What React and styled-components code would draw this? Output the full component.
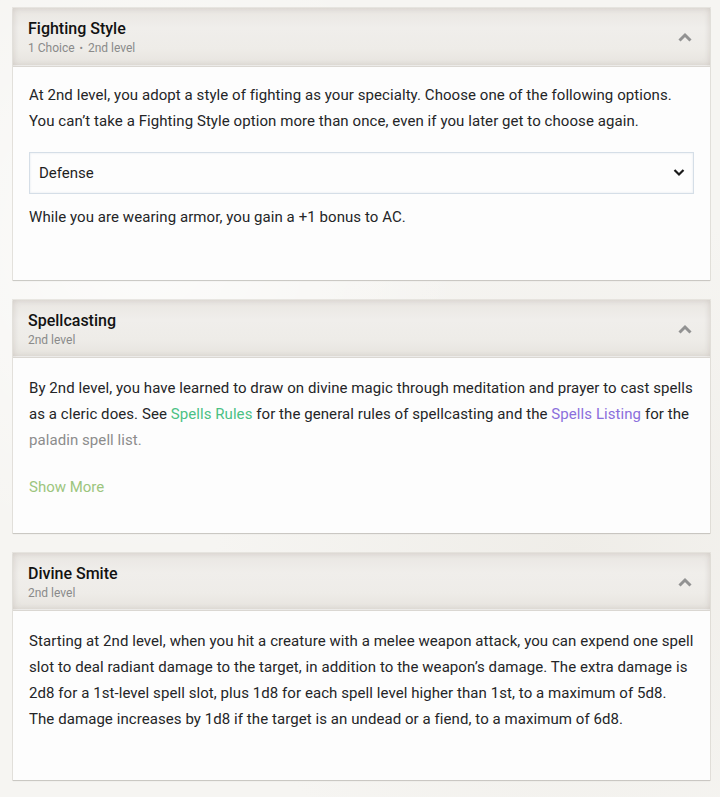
import React from "react";
import styled, { createGlobalStyle } from "styled-components";

const Global = createGlobalStyle`
  html, body { margin: 0; padding: 0; }
  body {
    background: #f6f5f2;
    background-image:
      radial-gradient(circle at 20% 30%, rgba(255,255,255,0.7) 0, rgba(255,255,255,0) 40%),
      radial-gradient(circle at 80% 70%, rgba(232,229,222,0.5) 0, rgba(232,229,222,0) 45%);
    font-family: Roboto, "Liberation Sans", sans-serif;
    color: #242527;
  }
`;

const Page = styled.div`
  display: flex;
  flex-direction: column;
  gap: 20px;
  padding: 8px 10px 20px 13px;
`;

const Card = styled.section`
  display: flex;
  flex-direction: column;
  background: #fdfdfd;
  box-shadow: 0 1px 1px rgba(0,0,0,0.12), 0 0 0 1px rgba(220,216,210,0.6);
`;

const Header = styled.header`
  display: flex;
  align-items: center;
  justify-content: space-between;
  height: ${(p) => p.$h}px;
  box-sizing: border-box;
  padding: 0 16px 0 15px;
  background: linear-gradient(180deg, #e9e6e2 0%, #f0eeeb 35%, #eeece8 70%, #e6e3de 100%);
  box-shadow: inset 0 0 6px rgba(160,150,140,0.35), inset 0 -1px 0 rgba(255,255,255,0.8);
  border-bottom: 1px solid #dad7d2;
`;

const Titles = styled.div`
  display: flex;
  flex-direction: column;
  gap: 2px;
  padding-top: 1px;
`;

const Title = styled.h2`
  margin: 0;
  font-size: 16px;
  font-weight: 500;
  line-height: 20px;
  color: #121212;
`;

const Sub = styled.div`
  font-size: 12px;
  line-height: 14px;
  color: #8a8a8a;
`;

const Dot = styled.span`
  margin: 0 5px;
  font-size: 10px;
`;

const Toggle = styled.button`
  border: 0;
  background: none;
  padding: 0;
  width: 18px;
  height: 18px;
  display: flex;
  align-items: center;
  justify-content: center;
  color: #929292;
  cursor: pointer;
`;

const Body = styled.div`
  padding: ${(p) => p.$pt}px 15px ${(p) => p.$pb}px 16px;
  font-size: 15px;
  line-height: 26px;
  letter-spacing: 0.07px;
`;

const P = styled.p`
  margin: 0 0 ${(p) => (p.$mb != null ? p.$mb : 16)}px;
`;

const Faded = styled.span`
  color: #8c8c8c;
`;

const Link = styled.a`
  color: ${(p) => (p.$tone === "purple" ? "#8b6fdc" : "#4bc184")};
  text-decoration: none;
`;

const SelectWrap = styled.div`
  position: relative;
  margin: 18px 1px 10px 0;
`;

const Select = styled.select`
  appearance: none;
  width: 100%;
  height: 42px;
  box-sizing: border-box;
  border: 1px solid #d5dee7;
  background: #fdfdfd;
  box-shadow: inset 0 0 2px rgba(200,212,224,0.6);
  padding: 0 30px 0 9px;
  font-family: Roboto, "Liberation Sans", sans-serif;
  font-size: 15px;
  color: #1f1f1f;
`;

const SelectIcon = styled.svg`
  position: absolute;
  right: 9px;
  top: 16px;
  pointer-events: none;
`;

const ShowMore = styled.button`
  display: block;
  border: 0;
  background: none;
  padding: 0;
  margin-top: 21px;
  font-family: Roboto, "Liberation Sans", sans-serif;
  font-size: 15px;
  line-height: 26px;
  color: #9cc57e;
  cursor: pointer;
`;

const Chevron = () => (
  <svg width="16" height="10" viewBox="0 0 16 10">
    <path d="M2.5 8.5 L8 3 L13.5 8.5" fill="none" stroke="currentColor" strokeWidth="3" strokeLinejoin="miter" />
  </svg>
);

const FeatureHeader = ({ title, sub, h }) => (
  <Header $h={h}>
    <Titles>
      <Title>{title}</Title>
      <Sub>{sub}</Sub>
    </Titles>
    <Toggle aria-label="collapse">
      <Chevron />
    </Toggle>
  </Header>
);

export default function App() {
  return (
    <>
      <Global />
      <Page>
        <Card>
          <FeatureHeader
            h={59}
            title="Fighting Style"
            sub={
              <>
                1 Choice<Dot>•</Dot>2nd level
              </>
            }
          />
          <Body $pt={15} $pb={34}>
            <P $mb={0}>
              At 2nd level, you adopt a style of fighting as your specialty. Choose one of the following options.
              You can’t take a Fighting Style option more than once, even if you later get to choose again.
            </P>
            <SelectWrap>
              <Select defaultValue="defense">
                <option value="defense">Defense</option>
                <option value="dueling">Dueling</option>
                <option value="gwf">Great Weapon Fighting</option>
                <option value="protection">Protection</option>
              </Select>
              <SelectIcon width="12" height="9" viewBox="0 0 12 9">
                <path d="M1.5 2 L6 6.5 L10.5 2" fill="none" stroke="#1a1a1a" strokeWidth="2.2" />
              </SelectIcon>
            </SelectWrap>
            <P>While you are wearing armor, you gain a +1 bonus to AC.</P>
          </Body>
        </Card>

        <Card>
          <FeatureHeader h={58} title="Spellcasting" sub="2nd level" />
          <Body $pt={17} $pb={33}>
            <P>
              By 2nd level, you have learned to draw on divine magic through meditation and prayer to cast spells
              as a cleric does. See <Link $tone="green">Spells Rules</Link> for the general rules of spellcasting and
              the <Link $tone="purple">Spells Listing</Link> for the <Faded>paladin spell list.</Faded>
            </P>
            <ShowMore>Show More</ShowMore>
          </Body>
        </Card>

        <Card>
          <FeatureHeader h={58} title="Divine Smite" sub="2nd level" />
          <Body $pt={17} $pb={32}>
            <P>
              Starting at 2nd level, when you hit a creature with a melee weapon attack, you can expend one spell
              slot to deal radiant damage to the target, in addition to the weapon’s damage. The extra damage is
              2d8 for a 1st-level spell slot, plus 1d8 for each spell level higher than 1st, to a maximum of 5d8.
              The damage increases by 1d8 if the target is an undead or a fiend, to a maximum of 6d8.
            </P>
          </Body>
        </Card>
      </Page>
    </>
  );
}
